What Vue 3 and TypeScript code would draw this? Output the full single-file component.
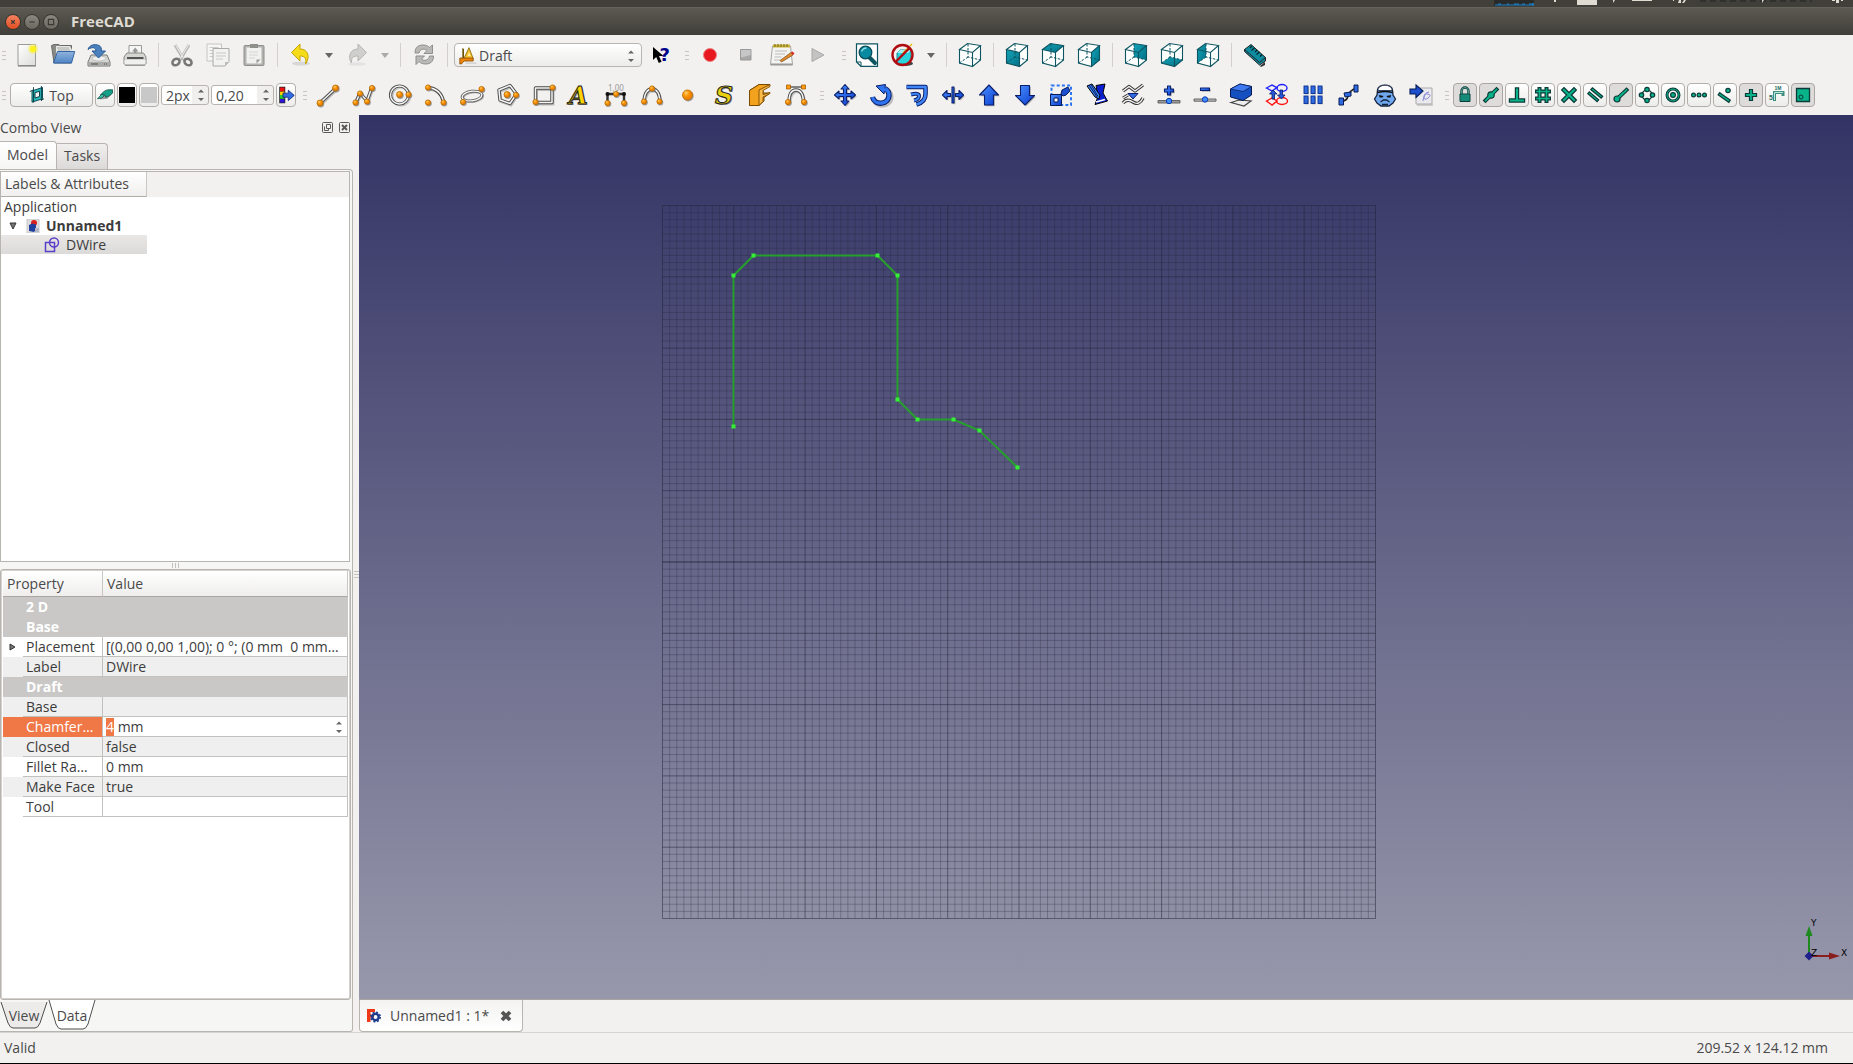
<script setup lang="ts">
import { onMounted, ref } from 'vue'

type Tool = { kind: 'icon' | 'sep' | 'grip' | 'arrow'; icon?: string; label?: string; wide?: boolean; off?: boolean }

const icon = (name: string, label: string, off = false): Tool => ({ kind: 'icon', icon: name, label, off })
const sep: Tool = { kind: 'sep' }

/* small orange node used by most drafting icons */
const ball = (x: number, y: number, r = 2.6) =>
  `<circle cx="${x + 0.8}" cy="${y + 1}" r="${r + 0.4}" fill="#777" opacity=".7"/><circle cx="${x}" cy="${y}" r="${r}" fill="url(#gOrange)" stroke="#b86a00" stroke-width=".8"/>`

/* stroked outline with a lighter core */
const tube = (d: string, outer: string, inner: string, wo: number, wi: number, cap = 'butt') =>
  `<path d="${d}" fill="none" stroke="${outer}" stroke-width="${wo}" stroke-linecap="${cap}" stroke-linejoin="round"/><path d="${d}" fill="none" stroke="${inner}" stroke-width="${wi}" stroke-linecap="${cap}" stroke-linejoin="round"/>`
const wire = (d: string) =>
  `<path d="${d}" transform="translate(1 1.4)" fill="none" stroke="#999" stroke-width="3" opacity=".6"/>` + tube(d, '#4a4a4a', '#f4f4f4', 3.4, 1.5)
const snap = (d: string, w = 4.6) => tube(d, '#0c3a38', '#08b389', w, w - 2.4, 'square')
const dot = (x: number, y: number, r = 2) => `<circle cx="${x}" cy="${y}" r="${r}" fill="#08b389" stroke="#0c3a38" stroke-width="1.2"/>`

const cubeFaces: Record<string, string> = {
  none: '',
  front: '1.5,6.5 14.5,9.5 14.5,23.5 1.5,20',
  top: '1.5,6.5 9.5,.5 22.5,2.5 14.5,9.5',
  right: '14.5,9.5 22.5,2.5 22.5,17 14.5,23.5',
  rear: '10,.5 22.5,2.5 22.5,17 10,14',
  bottom: '1.5,20 10,14 22.5,17 14.5,23.5',
  left: '1.5,6.5 10,.5 10,14 1.5,20',
}
const cube = (face: string) =>
  `<path d="M1.500 6.500 9.500.5 22.500 2.500V17l-8 6.500-13-3.500z" fill="#fdfefe"/><polygon points="${cubeFaces[face]}" fill="url(#gTeal)"/><path d="M1.500 6.500 9.500.5l13 2L14.500 9.500zM1.500 6.500V20l13 3.500V9.500M14.500 23.500l8-6.500V2.500" fill="none" stroke="#0d5560" stroke-width="1.100"/><path d="M10 1v13l12.500 3M10 14l-8.500 6" fill="none" stroke="#0d5560" stroke-width="1" stroke-dasharray="2.500 1.500"/>`

const blueShape = (d: string) =>
  `<path d="${d}" transform="translate(1.300 1.300)" fill="#888" opacity=".6"/><path d="${d}" fill="url(#gBlue)" stroke="#0a1f6b" stroke-width="1.100" stroke-linejoin="round"/>`

const icons: Record<string, string> = {
  new: `<path d="M3 1.500h17.500v21H3z" fill="url(#gPaper)" stroke="#9b9b97"/><path d="M3 23h18" stroke="#777" stroke-width="1"/><circle cx="18" cy="6" r="5" fill="#f8f04a" opacity=".55"/><circle cx="18" cy="6" r="3" fill="#fdf21b"/>`,
  open: `<path d="M.5 2.500 3 1.500h5l1 1h11.500V20H3z" fill="#8a8a87" stroke="#6b6b68"/><path d="M5 3h14l2 4v4H5z" fill="#e6e6e3"/><path d="M6 5h12M7 7h12" stroke="#aaa"/><path d="M2.500 20 6.500 8.500h17.200L20.500 20z" fill="url(#gFolder)" stroke="#3465a4"/>`,
  save: `<path d="M4 12h16l3 7v4H1v-4z" fill="#d6d6d3" stroke="#777"/><path d="M1.500 19h21v3.500h-21z" fill="#a9aba6"/><path d="M4 21h7M17 21h1M19 21h1" stroke="#555"/><ellipse cx="12" cy="15.500" rx="7" ry="2.500" fill="#eee" stroke="#aaa" stroke-width=".6"/><path d="M1 6.500C2 2 8 .5 12 2.500c2.200 1.200 2.500 3 2.500 5.500h4L11.500 15 5 8h4C9 4.500 5 3.500 1 6.500z" fill="#4a80bd" stroke="#2a5a96"/>`,
  print: `<path d="M6 12V2.500h12.500V12" fill="#f5f5f3" stroke="#999"/><path d="M12.200 4.500 9 8.500h2V11h2.500V8.500h2z" fill="#999"/><path d="M4 10h16.500l2.500 4v7H1v-7z" fill="#d5d5d2" stroke="#888"/><path d="M4 14h16.500v2H4z" fill="#555"/><path d="M1.500 17h21v4h-21z" fill="#f0f0ee"/><path d="M2 22.500h20" stroke="#999"/>`,
  cut: `<path d="M5 2l9 15M19 2 10 17" stroke="#b9b9b7" stroke-width="3"/><path d="M5.500 2l8.500 14M18.500 2 10 16" stroke="#eee" stroke-width="1"/><ellipse cx="6" cy="19" rx="3.800" ry="3" fill="none" stroke="#777" stroke-width="2.600" transform="rotate(-35 6 19)"/><ellipse cx="18" cy="19" rx="3.800" ry="3" fill="none" stroke="#777" stroke-width="2.600" transform="rotate(35 18 19)"/>`,
  copy: `<path d="M1 1h14.500v17H1z" fill="#f6f6f5" stroke="#c4c4c2"/><path d="M3.500 4.500h9M3.500 7.500h5M3.500 10.500h4M3.500 13.500h4" stroke="#ccc"/><path d="M7 5.500h16v13L19 23H7z" fill="#f2f2f0" stroke="#aaa"/><path d="M10 10h10M10 13h10M10 16h7" stroke="#c8c8c6"/><path d="M19 23v-4h4z" fill="#bbb"/>`,
  paste: `<rect x="2" y="2.500" width="20" height="20" rx="1" fill="#b2b2af" stroke="#8e8e8b"/><path d="M4.500 4.500h15v16h-15z" fill="#f1f1ef"/><path d="M7 9h9M7 12h9M7 15h6" stroke="#d4d4d2"/><path d="M8 1h8v4H8z" fill="#8f8f8c"/><path d="M14.500 20.500v-4h4z" fill="#999"/>`,
  undo: `<ellipse cx="12" cy="20.500" rx="9" ry="2" fill="#ccc" opacity=".7"/><path d="M2.500 9.500 11 1v5c8 0 10.500 8 5.500 15 1.200-5.500-.5-8-5.500-8v5z" fill="#f5dc1a" stroke="#c6a500"/>`,
  redo: `<ellipse cx="12" cy="21" rx="9" ry="1.800" fill="#ddd" opacity=".7"/><path d="M21.500 9.500 13 1v5C5 6 2.500 14 6.500 20c-.2-5.500 1.500-7 6.500-7v5z" fill="#cfcfcc" stroke="#b4b4b1"/>`,
  refresh: `<path d="M3 10c0-6 3.500-8 8-8 3 0 5 1 6.500 2.500L20.500 2v8.500H12l3-3c-3-2.500-7-1.500-8 2.500z" fill="#b9b9b6" stroke="#8f8f8c"/><path d="M21.500 13c0 6-3.500 8-8 8-3 0-5-1-6.500-2.500L4 21.500V13h8.500l-3 3c3 2.500 7 1.500 8-3z" fill="#b9b9b6" stroke="#8f8f8c"/>`,
  draft: `<path d="M4 18V2.500l2 1V18z" fill="#6b5300"/><path d="M6 15 12 2l5 13z" fill="#f2c230" stroke="#8a6500"/><path d="M10.500 12 12 7.500l2 4.500z" fill="#fff2b0"/><path d="M1 14.500h16v3.500H6l-3 3.500H1z" fill="#f0860c" stroke="#8a4a00"/><path d="M8 20.500h13" stroke="#bbb"/>`,
  whats: `<path d="M4 4v13l3.200-3 2.600 6 2.800-1.200L10 13h4.500z" fill="#000"/><text x="10.500" y="17.500" font-size="18" font-weight="700" fill="#00008b" font-family="DejaVu Sans, sans-serif">?</text>`,
  record: `<circle cx="12" cy="12" r="6.500" fill="#e8191e" stroke="#f08082"/>`,
  stop: `<path d="M6.500 6.500h10.500v10.500H6.500z" fill="#a8a8a8" stroke="#999"/><path d="M7 7h9.500v5L7 14.500z" fill="#c7c7c7"/>`,
  macro: `<path d="M2.500 3h18l2 18.500H.5z" fill="#f4f4f2" stroke="#a5a5a2"/><path d="M.5 21.500h22" stroke="#999" stroke-width="2"/><path d="M3 1.500h17v3H3z" fill="#c9b037"/><path d="M5 1v3M8 1v3M11 1v3M14 1v3M17 1v3" stroke="#7a6a1a"/><path d="M5 8h12M5 11h10M4.500 14h7M4 17h6" stroke="#bbb"/><path d="M10 17.500 21 9.500l2 2.500-11.500 7z" fill="#e08a2c" stroke="#7a4a1a" stroke-width=".7"/><path d="M21 9.500l1.500-1 2 2L23 12z" fill="#d22"/>`,
  play: `<path d="M6 5.500 18 12 6 18.500z" fill="#c3c3c3" stroke="#a9a9a9"/>`,
  fit: `<path d="M1.500.8H22.500v22.500H6L1.500 19z" fill="#fff" stroke="#0d5560" stroke-width="1.200"/><path d="M1.500 19h4.500v4.300" fill="none" stroke="#0d5560"/><path d="M14 14l6 6" stroke="#0d5560" stroke-width="4" stroke-linecap="round"/><circle cx="10.500" cy="9.500" r="6.300" fill="#0a8aa0" stroke="#0b4b57" stroke-width="1.300"/><path d="M6.500 8.500q1.500-3.500 5-3.500" stroke="#8fe0ec" stroke-width="1.300" fill="none"/>`,
  style: `<ellipse cx="14" cy="20.500" rx="8" ry="2.500" fill="#444"/><path d="M6 10 9 7h11v11l-3 3H6z" fill="#2bd3da" stroke="#1b8b96"/><path d="M9 7h11l-3 3H6z" fill="#a5f1f2"/><path d="m19 3 2-2M12 10l5-5" stroke="#e8c010" stroke-width="1.600"/><circle cx="11.500" cy="12" r="10" fill="none" stroke="#b00c12" stroke-width="2.400"/><path d="M4.500 5 18.500 19" stroke="#b00c12" stroke-width="0"/><path d="M18.500 5 4.500 19" stroke="#b00c12" stroke-width="2.400"/>`,
  axo: cube('none'), front: cube('front'), top: cube('top'), right: cube('right'), rear: cube('rear'), bottom: cube('bottom'), left: cube('left'),
  ruler: `<path d="M2 9 17 23l5-4v3l-4 2z" fill="#333"/><path d="M1.500 6.500 8 1.500 22.500 14.500v3.500L16.500 22 1.500 8.500z" fill="#0f8ba0" stroke="#222"/><path d="M1.500 6.500 16.500 19.500l6-5" fill="none" stroke="#222"/><path d="m9 3-2 2m4.500 0-3 2.500M14 7l-2 2m4.500 0-3 2.500M19 11.500l-2 2" stroke="#022" stroke-width="1.100"/>`,
  plane: `<path d="M4 6.500 18 2v15L4 21.500z" fill="#28b9bd" stroke="#0b4a50" stroke-width="1.300"/><path d="M8 9l6-2v7l-6 2z" fill="#f4f4f4" stroke="#0b3a40" stroke-width="1.300"/><path d="M1 7.500l4-2M16 19l4-2M6 1.500V22M16.500 0v20" stroke="#0b3a40" stroke-width="1.200"/>`,
  construct: `<path d="M5 18 9 11l12-4 2 2-8 8z" fill="#444" opacity=".5"/><path d="M6 12C9 8 13 5 17 5h5v4c-2 3-5 5-9 6l-1-3z" fill="#13a088" stroke="#0a4a40"/><path d="M2 17 8 10.500l3 2.500-3 3z" fill="#3fc0aa" stroke="#0a4a40"/>`,
  apply: `<path d="M3 1h8v22H3z" fill="#222"/><path d="M4 2h6v5H4z" fill="#e11"/><path d="M4 7.500h6V12H4z" fill="#fc0"/><path d="M4 12h6v5H4z" fill="#2c3"/><path d="M4 17.500h6V22H4z" fill="#31d"/><path d="M8 9.500h7V5.500l8 7-8 7V15H8z" fill="#2f6ae0" stroke="#0a1f6b"/>`,
  line: wire('M4 20 20 5') + ball(4, 20, 3) + ball(19.500, 5, 3),
  wire: wire('M4 19 8 10 15 18 19.500 5.500') + ball(3.500, 19.500) + ball(8, 10.500) + ball(15, 18.500) + ball(20, 5),
  circle: `<circle cx="13" cy="13" r="9" fill="none" stroke="#999" stroke-width="3" opacity=".5"/><circle cx="11.500" cy="12" r="9" fill="none" stroke="#4a4a4a" stroke-width="3.200"/><circle cx="11.500" cy="12" r="9" fill="none" stroke="#f4f4f4" stroke-width="1.400"/>` + ball(11.500, 11.500, 3) + ball(20.500, 11.500),
  arc: wire('M4 4.500Q17 6 19.500 19') + ball(4, 4.500) + ball(4, 19.500) + ball(19.500, 19.500),
  ellipse: `<g transform="rotate(-8 12 13)"><ellipse cx="13" cy="14.300" rx="10" ry="4.800" fill="none" stroke="#aaa" stroke-width="2"/><ellipse cx="12" cy="13" rx="10" ry="4.800" fill="none" stroke="#555" stroke-width="2.800"/><ellipse cx="12" cy="13" rx="10" ry="4.800" fill="none" stroke="#f6f6f6" stroke-width="1.300"/></g>` + ball(3, 19) + ball(21.500, 6),
  polygon: wire('M3 7 14 2.500 20.500 11 14 20.500 4 17z') + ball(11, 11.500, 3) + ball(20, 12),
  rect: wire('M3.500 5H20v14.500H3.500z') + ball(20.500, 4.500) + ball(3.500, 19),
  text: `<text x="2" y="22" font-size="24" font-style="italic" font-weight="700" fill="#888" font-family="DejaVu Serif, serif">A</text><text x="1" y="21" font-size="24" font-style="italic" font-weight="700" fill="#ffd400" stroke="#222" stroke-width="1" font-family="DejaVu Serif, serif">A</text>`,
  dim: `<text x="4" y="8" font-size="8" fill="#999" font-family="Noto Sans, sans-serif">1,00</text><path d="M3.500 11H21M3.500 11v8M20 11v8" stroke="#333" stroke-width="2.400"/><circle cx="3.500" cy="11" r="2" fill="#111"/><circle cx="20" cy="11" r="2" fill="#111"/>` + ball(12, 11) + ball(3.500, 20) + ball(20, 20),
  bspline: wire('M4 18Q5 6 12 6T20 18') + ball(12, 5.500) + ball(4, 18.500) + ball(19.500, 18.500),
  point: ball(11.500, 12, 5),
  shape: `<text x="4" y="21.500" font-size="25" font-style="italic" font-weight="700" fill="#888" font-family="DejaVu Serif, serif">S</text><text x="3" y="20.500" font-size="25" font-style="italic" font-weight="700" fill="#e8cf10" stroke="#222" stroke-width="1" font-family="DejaVu Serif, serif">S</text>`,
  face: `<path d="M1.500 7.500 11 1.500v16L1.500 22.500z" fill="#f2a21c" stroke="#7a4a00"/><path d="M1.500 7.500 11 1.500h11l-7 5v3.500h7l-6 4.500v3.500L11 22.500H1.500z" fill="#f2a21c" stroke="#7a4a00"/><path d="M11 7v15.500l4-4V14l7-3.500V9.500l-7 2V7.500l7-4V1.500z" fill="#fbbb4a" stroke="#7a4a00" stroke-width=".9"/>`,
  bezier: `<path d="M4 4h16" stroke="#555" stroke-width="1.400"/>` + wire('M5 19Q5 7 12 7T19.500 19') + `<path d="M2.500 2h4v4h-4zM17.500 2h4v4h-4z" fill="#ff9c1a" stroke="#a85f00" stroke-width=".8"/>` + ball(4, 19) + ball(20, 19),
  move: blueShape('M12 1.500 16 6h-2.500v4.500H18V8l4.500 4-4.500 4v-2.500h-4.500V18H16l-4 4.500L8 18h2.500v-4.500H6V16l-4.500-4L6 8v2.500h4.500V6H8z'),
  rotate: `<path d="M4 15c2 9 17 8 17-2 0-3-1-5-4-7" transform="translate(1 1)" fill="none" stroke="#888" stroke-width="5" opacity=".5"/>` + tube('M3.500 14c2 9 16.500 8 16.500-2 0-3-1.500-5-4-6.500', '#0a1f6b', '#2f74ee', 5.400, 3.400) + `<path d="M7 3 16.500 1.500 15 11z" fill="#2f74ee" stroke="#0a1f6b" stroke-linejoin="round"/><path d="m13.500 5.500 3.500 2" stroke="#2f74ee" stroke-width="3"/>`,
  offset: tube('M1.500 4H20.500V11q0 8-9 10.500', '#0a1f6b', '#3f85f5', 4.600, 2.600) + tube('M6 11.500q8-2 8 1.500t-5 4.500', '#0a1f6b', '#3f85f5', 4, 2),
  trimex: blueShape('M1.500 12 6 7.500v3h3.500v3H6v3zM22.500 12 18 7.500v3h-3.500v3H18v3zM11 4h2v16h-2z'),
  upgrade: blueShape('M12 2 21.500 12H16.500v10h-9V12H2.500z'),
  downgrade: blueShape('M12 22 21.500 12.500H16.500V2.500h-9v10H2.500z'),
  scale: `<path d="M2.500 2.500H22v19.500H2.500z" fill="none" stroke="#2a76f0" stroke-width="2" stroke-dasharray="3 2.200"/><path d="M1.500 11.500H12.500V22.500H1.500z" fill="url(#gBlue)" stroke="#061a55"/><path d="M5 15h4v4H5z" fill="#fff" stroke="#061a55"/><path d="m12 11 1-4 2-1 4-2 2 4-4 4-3 1z" fill="#1a50d0" stroke="#061a55"/>`,
  edit: `<path d="M11 2.500 20 1l-2 9 4.500 8L10 21.500l3-8z" fill="#0b1fd0" stroke="#000"/><path d="M2 3 7 1l8 11-1 4-4-2z" fill="#3b84f0" stroke="#000"/><path d="m4 2 8 12M6 1.500l7 12" stroke="#0a1f6b"/><path d="m11 19 9-2.500" stroke="#fff" stroke-width="1.500"/>`,
  wire2bs: tube('M2 8 8 3.500 14 8 22 2', '#333', '#f2f2f2', 3.400, 1.400) + tube('M2 20q4-5 10-1t10-4', '#333', '#f2f2f2', 3.400, 1.400) + tube('M2 15l5-3', '#333', '#f2f2f2', 3, 1.200) + `<path d="M7 10.500h10L12 16z" fill="#2f6ae0" stroke="#0a1f6b"/>`,
  addpt: `<path d="M1 17.500h22v2.500H1z" fill="#999" stroke="#666"/>` + blueShape('M10.500 3h3v3h3v3h-3v3h-3V9h-3V6h3z') + `<circle cx="12" cy="18" r="2.700" fill="#3f8cff" stroke="#0a3bb0"/>`,
  delpt: `<path d="M1 16h22v2.200H1z" fill="#bbb" stroke="#666"/>` + blueShape('M7.500 5h9v2.500h-9z') + `<circle cx="12" cy="16.500" r="2.700" fill="#3f8cff" stroke="#0a3bb0"/>`,
  to2d: `<path d="M2 19.500 10 17l12 1-7 5z" fill="#eee" stroke="#444" stroke-width="1.200"/><path d="M1.500 6 11 1l11.500 2.500V12L14 17.500 1.500 14z" fill="#1450c0" stroke="#061a55"/><path d="M1.500 6 11 1l11.500 2.500-8.500 5z" fill="#3f7af0" stroke="#061a55" stroke-width=".7"/>`,
  draft2sk: `<path d="M1.500 5 7 2l5 2.500L7 8z" fill="none" stroke="#22f" stroke-width="1.400"/><ellipse cx="17" cy="5" rx="5" ry="3.500" fill="none" stroke="#22f" stroke-width="1.400"/><path d="M1.500 18 7 15l5 3-5 4z" fill="none" stroke="#f11" stroke-width="1.400"/><ellipse cx="17" cy="18" rx="5.500" ry="3.500" fill="none" stroke="#f11" stroke-width="1.400"/><path d="M8 7 4.500 11H7v5h2.500v-5H12zM16.500 16 20 12h-2.500V7H15v5h-2.500z" fill="#2458d8" stroke="#0a1f6b" stroke-width=".8"/>`,
  array: [3, 10, 17].map(x => [3, 13].map(y => `<rect x="${x + 0.8}" y="${y + 0.8}" width="4" height="7.500" fill="#aaa"/><rect x="${x}" y="${y}" width="4" height="7.500" fill="#2f6ae0" stroke="#0a2f90" stroke-width=".9"/>`).join('')).join(''),
  patharray: `<path d="M5 18q5 0 6-5t8-8" fill="none" stroke="#222" stroke-width="1.600"/><path d="M2 15h4.500v7H2z" fill="#2f6ae0" stroke="#061a55"/><path d="m7 10 7-1v4l-6 1z" fill="#2f6ae0" stroke="#061a55"/><path d="M17 2h4v7h-4z" fill="#2f6ae0" stroke="#061a55"/>`,
  clone: `<path d="M4.500 7C5 .5 19 .5 19.500 7l.5 5 2.500 4-2.500 4-4 3H8l-4-3-2.500-4L4 12z" fill="#6fa8ee" stroke="#16233f" stroke-width="1.300"/><path d="M4.800 7.500C5 .5 19 .5 19.200 7.500z" fill="#fff" stroke="#16233f" stroke-width=".8"/><path d="M4.500 9.500q7.500-2 15 0" fill="none" stroke="#111" stroke-width="1.400"/><path d="M6 12l4.500 1-1 1.500H6.500zM18 12l-4.500 1 1 1.500h3z" fill="#111"/><path d="M7.500 19l3-2h3l3 2M9 21.500h6" fill="none" stroke="#16233f" stroke-width="1.300"/>`,
  drawing: `<path d="M7 5h16v16H7z" fill="#e9e9ee" stroke="#aaa"/><path d="M8 22h16" stroke="#aaa"/><path d="M14 18q1-8 5-7t0 4-4-1 5-5" fill="none" stroke="#8a8ad8"/><path d="M1 6h6V2l7 6-7 6.500V11H1z" fill="#1c50d0" stroke="#061a55" stroke-width="1.100"/>`,
  lock: `<path d="M8.500 11V8a3.500 3.500 0 0 1 7 0v3" fill="none" stroke="#0c3a38" stroke-width="2.400"/><path d="M8.500 11V8a3.500 3.500 0 0 1 7 0v3" fill="none" stroke="#5fbfae" stroke-width=".8"/><path d="M7 11h10v7.500H7z" fill="#1aa08a" stroke="#0c3a38"/><path d="M7.500 13h9M7.500 15h9M7.500 17h9" stroke="#0d6d60" stroke-width=".8"/>`,
  mid: snap('M6.500 17.500 17.500 6.500', 4) + `<circle cx="12" cy="12" r="3.200" fill="#08b389" stroke="#0c3a38" stroke-width="1.200"/><path d="m8 16 8-8" stroke="#08b389" stroke-width="1.800"/>`,
  perp: snap('M6 17.500h12M12 17V6.500', 4.400) + `<path d="M12 8v8.500" stroke="#08b389" stroke-width="2"/>`,
  grid: snap('M8.500 6v12M15.500 6v12M6 8.500h12M6 15.500h12', 4),
  cross: snap('M7 7 17 17M17 7 7 17', 4.600),
  parallel: snap('M6.500 10.500 14 17', 3.600) + snap('M9.500 6.500 18 13.500', 3.600),
  endp: snap('M8 16 17.500 7', 4) + `<circle cx="8" cy="16" r="3" fill="#08b389" stroke="#0c3a38" stroke-width="1.200"/><path d="m8.500 15.500 6-6" stroke="#08b389" stroke-width="1.600"/>`,
  angle: `<circle cx="12" cy="12" r="5" fill="none" stroke="#0c3a38" stroke-width="1.200"/>` + dot(12, 6.500, 2.200) + dot(12, 17.500, 2.200) + dot(6.500, 12, 2.200) + dot(17.500, 12, 2.200),
  center: `<circle cx="12" cy="12" r="6" fill="none" stroke="#0c3a38" stroke-width="3"/><circle cx="12" cy="12" r="6" fill="none" stroke="#08b389" stroke-width="1"/>` + dot(12, 12, 2.400),
  ext: dot(6.500, 12, 1.900) + dot(12, 12, 1.900) + dot(17.500, 12, 1.900),
  near: snap('M7 11.500 15.500 17.500', 3.800) + dot(15, 7.500, 2.200),
  ortho: snap('M12 8v8M8 12h8', 4.200),
  special: `<path d="M9.500 18V9.500H18V13" fill="none" stroke="#3f8f80" stroke-width="3"/><path d="M9.500 17V9.500H18" fill="none" stroke="#bfe8dd" stroke-width="1"/><text x="9.500" y="7" font-size="5" font-weight="700" fill="#1c6b5e" font-family="Liberation Sans, sans-serif">1M</text><text x="4" y="17" font-size="7" font-weight="700" fill="#1c6b5e" font-family="Liberation Sans, sans-serif">5</text>`,
  wp: `<path d="M5.500 5.500h13v13h-13z" fill="#08b389" stroke="#0c3a38" stroke-width="1.300"/><circle cx="10" cy="14" r="2" fill="#08b389" stroke="#0c3a38"/>`,
}

const row1a: Tool[] = [
  { kind: 'grip' }, icon('new', 'New'), icon('open', 'Open'), icon('save', 'Save'), icon('print', 'Print'), sep,
  icon('cut', 'Cut'), icon('copy', 'Copy'), icon('paste', 'Paste'), sep,
  icon('undo', 'Undo'), { kind: 'arrow', label: 'Undo list' }, icon('redo', 'Redo', true), { kind: 'arrow', label: 'Redo list', off: true }, sep,
  icon('refresh', 'Refresh'), sep,
]
const row1b: Tool[] = [
  icon('whats', "What's This?"), { kind: 'grip', wide: true },
  icon('record', 'Record macro'), icon('stop', 'Stop macro'), icon('macro', 'Macros'), icon('play', 'Execute macro'), { kind: 'grip', wide: true },
  icon('fit', 'Fit all'), icon('style', 'Draw style'), { kind: 'arrow', label: 'Draw styles' }, sep,
  icon('axo', 'Axonometric'), sep, icon('front', 'Front'), icon('top', 'Top view'), icon('right', 'Right'), sep,
  icon('rear', 'Rear'), icon('bottom', 'Bottom'), icon('left', 'Left'), sep, icon('ruler', 'Measure distance'),
]
const row2: Tool[] = [
  { kind: 'grip', wide: true },
  ...([['line', 'Line'], ['wire', 'Wire'], ['circle', 'Circle'], ['arc', 'Arc'], ['ellipse', 'Ellipse'], ['polygon', 'Polygon'], ['rect', 'Rectangle'], ['text', 'Text'], ['dim', 'Dimension'], ['bspline', 'B-spline'], ['point', 'Point'], ['shape', 'Shape string'], ['face', 'Facebinder'], ['bezier', 'Bezier curve']]).map(([i, l]) => icon(i, l)),
  { kind: 'grip', wide: true },
  ...([['move', 'Move'], ['rotate', 'Rotate'], ['offset', 'Offset'], ['trimex', 'Trimex'], ['upgrade', 'Upgrade'], ['downgrade', 'Downgrade'], ['scale', 'Scale'], ['edit', 'Edit'], ['wire2bs', 'Wire to B-spline'], ['addpt', 'Add point'], ['delpt', 'Delete point'], ['to2d', 'Shape 2D view'], ['draft2sk', 'Draft to sketch'], ['array', 'Array'], ['patharray', 'Path array'], ['clone', 'Clone'], ['drawing', 'Drawing']]).map(([i, l]) => icon(i, l)),
  { kind: 'grip', wide: true },
]
const snaps = [
  { i: 'lock', l: 'Toggle snap', on: true }, { i: 'mid', l: 'Midpoint', on: true }, { i: 'perp', l: 'Perpendicular' }, { i: 'grid', l: 'Grid' },
  { i: 'cross', l: 'Intersection' }, { i: 'parallel', l: 'Parallel' }, { i: 'endp', l: 'Endpoint', on: true }, { i: 'angle', l: 'Angle' },
  { i: 'center', l: 'Center' }, { i: 'ext', l: 'Extension' }, { i: 'near', l: 'Near' }, { i: 'ortho', l: 'Ortho', on: true },
  { i: 'special', l: 'Dimensions' }, { i: 'wp', l: 'Working plane', on: true },
]

type Prop = { name: string; value?: string; group?: boolean; tint?: boolean; expand?: boolean; edit?: boolean }
const props: Prop[] = [
  { name: '2 D', group: true },
  { name: 'Base', group: true },
  { name: 'Placement', value: '[(0,00 0,00 1,00); 0 °; (0 mm\u00a0 0 mm…', expand: true },
  { name: 'Label', value: 'DWire', tint: true },
  { name: 'Draft', group: true },
  { name: 'Base', value: '', tint: true },
  { name: 'Chamfer…', value: '4 mm', edit: true },
  { name: 'Closed', value: 'false', tint: true },
  { name: 'Fillet Ra…', value: '0 mm' },
  { name: 'Make Face', value: 'true', tint: true },
  { name: 'Tool', value: '' },
]

const step = 7.13
const gridLines = Array.from({ length: 101 }, (_, n) => ({ at: n * step, major: n % 10 === 0, axis: n === 50 }))
const span = 100 * step
const nodes = [[71, 221], [71, 70], [91, 50], [215, 50], [235, 70], [235, 194], [255, 214], [291, 214], [317, 225], [355, 262]]
const wirePath = nodes.map(p => p.join(',')).join(' ')

const editor = ref<HTMLInputElement[] | null>(null)
onMounted(() => {
  const field = editor.value?.[0]
  field?.focus()
  field?.setSelectionRange(0, 1)
})
</script>

<template>
  <div class="app">
    <svg class="defs" aria-hidden="true">
      <defs>
        <radialGradient id="gOrange" cx=".35" cy=".3"><stop offset="0" stop-color="#ffd27a" /><stop offset=".5" stop-color="#ff9f12" /><stop offset="1" stop-color="#f08400" /></radialGradient>
        <linearGradient id="gBlue" x2="1" y2="1"><stop offset="0" stop-color="#4d93ff" /><stop offset="1" stop-color="#0a3bd0" /></linearGradient>
        <linearGradient id="gTeal" x2="1" y2="1"><stop offset="0" stop-color="#14a3b8" /><stop offset="1" stop-color="#027186" /></linearGradient>
        <linearGradient id="gPaper" x2="1" y2="1"><stop offset="0" stop-color="#fff" /><stop offset="1" stop-color="#dcdcda" /></linearGradient>
        <linearGradient id="gFolder" x2="0" y2="1"><stop offset="0" stop-color="#8fb3dd" /><stop offset="1" stop-color="#5085c4" /></linearGradient>
      </defs>
    </svg>

    <div class="desktop-bar">
      <svg width="373" height="7" viewBox="0 0 373 7" aria-hidden="true">
        <path d="M14 0h40v6H14z" fill="#2a2a28" />
        <path d="M15 5h39M18 4h3M27 4h2M34 4h5M42 4h3M49 4h5M53 3v3" stroke="#1a86d0" stroke-width="1" />
        <path d="M97 0h20v5H97zM152 0h20v1h-20zM74 0h2v2h-2zM133 0h2l-2 3zM193 0h1v1h-1zM199 0h2v3h-3zM204 0h2l-2 3h-2zM352 0h3v1h-3zM356 0h3v3h-3zM361 0h2v1h-2z" fill="#dfdbd2" />
        <path d="M220 1h112" stroke="#30302d" stroke-width="2" stroke-dasharray="6 4" />
        <path d="M282 0h2l-2 3z" fill="#dfdbd2" />
      </svg>
    </div>

    <header class="titlebar">
      <button class="win close" aria-label="Close"><svg viewBox="0 0 16 16"><path d="m6 6 4 4m0-4-4 4" /></svg></button>
      <button class="win" aria-label="Minimize"><svg viewBox="0 0 16 16"><path d="M5 8h6" /></svg></button>
      <button class="win" aria-label="Maximize"><svg viewBox="0 0 16 16"><path d="M5 5h6v6H5z" /></svg></button>
      <h1>FreeCAD</h1>
    </header>

    <div class="toolbar" role="toolbar" aria-label="File and view">
      <template v-for="(t, n) in row1a" :key="n">
        <span v-if="t.kind === 'sep'" class="sep"></span>
        <span v-else-if="t.kind === 'grip'" class="grip"></span>
        <button v-else-if="t.kind === 'arrow'" class="arrow" :class="{ off: t.off }" :aria-label="t.label"></button>
        <button v-else class="tool" :aria-label="t.label"><svg viewBox="0 0 24 24" v-html="icons[t.icon!]"></svg></button>
      </template>
      <div class="combo">
        <svg class="combo-icon" viewBox="0 0 24 24" v-html="icons.draft"></svg>
        <select aria-label="Workbench"><option>Draft</option></select>
        <svg class="updown" viewBox="0 0 8 12"><path d="M1 3.500 4 .5l3 3zM1 9l3 3 3-3z" /></svg>
      </div>
      <template v-for="(t, n) in row1b" :key="n">
        <span v-if="t.kind === 'sep'" class="sep"></span>
        <span v-else-if="t.kind === 'grip'" class="grip" :class="{ wide: t.wide }"></span>
        <button v-else-if="t.kind === 'arrow'" class="arrow" :aria-label="t.label"></button>
        <button v-else class="tool" :aria-label="t.label"><svg viewBox="0 0 24 24" v-html="icons[t.icon!]"></svg></button>
      </template>
    </div>

    <div class="toolbar" role="toolbar" aria-label="Draft">
      <span class="grip"></span>
      <div class="tray">
        <button class="framed plane"><svg viewBox="0 0 24 24" v-html="icons.plane"></svg>Top</button>
        <button class="framed swatch" aria-label="Construction mode"><svg viewBox="0 0 24 24" v-html="icons.construct"></svg></button>
        <button class="framed swatch" aria-label="Line color"><i class="black"></i></button>
        <button class="framed swatch" aria-label="Face color"><i></i></button>
        <div class="spin narrow"><input value="2px" aria-label="Line width" /><svg class="updown" viewBox="0 0 8 12"><path d="M1 3.500 4 .5l3 3zM1 9l3 3 3-3z" /></svg></div>
        <div class="spin"><input value="0,20" aria-label="Text size" /><svg class="updown" viewBox="0 0 8 12"><path d="M1 3.500 4 .5l3 3zM1 9l3 3 3-3z" /></svg></div>
        <button class="framed swatch" aria-label="Apply to selected"><svg viewBox="0 0 24 24" v-html="icons.apply"></svg></button>
      </div>
      <template v-for="(t, n) in row2" :key="n">
        <span v-if="t.kind === 'grip'" class="grip" :class="{ wide: t.wide }"></span>
        <button v-else class="tool" :aria-label="t.label"><svg viewBox="0 0 24 24" v-html="icons[t.icon!]"></svg></button>
      </template>
      <div class="tray">
        <button v-for="s in snaps" :key="s.i" class="framed snap" :class="{ on: s.on }" :aria-label="s.l"><svg viewBox="0 0 24 24" v-html="icons[s.i]"></svg></button>
      </div>
    </div>

    <div class="body">
      <aside class="dock">
        <div class="dock-title">
          <h2>Combo View</h2>
          <button aria-label="Float"><svg viewBox="0 0 11 11"><rect x=".5" y=".5" width="10" height="10" rx="1" /><path d="M4.500 2.500h4v4h-4zM2.500 4.500v4h4v-2" /></svg></button>
          <button aria-label="Close panel"><svg viewBox="0 0 11 11"><rect x=".5" y=".5" width="10" height="10" rx="1" /><path d="m3 3 5 5m0-5-5 5" stroke-width="2" /></svg></button>
        </div>
        <div class="tabs" role="tablist">
          <button class="tab active" role="tab">Model</button>
          <button class="tab" role="tab">Tasks</button>
        </div>
        <div class="pane">
          <div class="tree">
            <div class="tree-head"><span>Labels &amp; Attributes</span></div>
            <ul>
              <li class="root">Application</li>
              <li class="doc">
                <svg class="twist" viewBox="0 0 8 8"><path d="M1 1h6L4 7z" fill="#777" stroke="#333" /></svg>
                <svg class="doc-icon" viewBox="0 0 14 14"><path d="M1 0h12v14H1z" fill="#ddd" stroke="#c8c8c8" /><circle cx="8" cy="4" r="3" fill="#d8201c" /><path d="m3 6 3-1.500 4 1V11l-2 2-5-1z" fill="#1f3f9f" /><path d="M9 9h4v4H9z" fill="#b4b8c4" /></svg>
                <b>Unnamed1</b>
              </li>
              <li class="leaf selected">
                <svg class="wire-icon" viewBox="0 0 16 16"><path d="M1.500 5.500h9v9h-9z" /><circle cx="10" cy="5.500" r="4.500" /></svg>
                DWire
              </li>
            </ul>
          </div>
          <div class="splitter"><i></i></div>
          <div class="props">
            <table>
              <colgroup><col class="gutter" /><col class="name" /><col /></colgroup>
              <thead><tr><th colspan="2">Property</th><th>Value</th></tr></thead>
              <tbody>
                <tr v-for="(p, n) in props" :key="n" :class="{ group: p.group, tint: p.tint, edit: p.edit }">
                  <td class="lead"><svg v-if="p.expand" viewBox="0 0 8 8"><path d="M1 1v6l5-3z" fill="#777" stroke="#333" /></svg></td>
                  <td v-if="p.group" colspan="2">{{ p.name }}</td>
                  <template v-else>
                    <td class="label">{{ p.name }}</td>
                    <td class="value">
                      <div v-if="p.edit" class="editor">
                        <input ref="editor" :value="p.value" :aria-label="p.name" />
                        <svg class="updown" viewBox="0 0 8 12"><path d="M1 3.500 4 .5l3 3zM1 9l3 3 3-3z" /></svg>
                      </div>
                      <template v-else>{{ p.value }}</template>
                    </td>
                  </template>
                </tr>
              </tbody>
            </table>
          </div>
          <div class="sub-tabs" role="tablist">
            <button role="tab"><svg viewBox="0 0 48 30"><path d="M1 2 8 23q2 5 5 5h22q3 0 5-5L47 2" fill="#ecebea" /></svg><span>View</span></button>
            <button role="tab" class="active"><svg viewBox="0 0 48 30"><path d="M1 0 8 24q2 5 5 5h22q3 0 5-5L47 0" fill="#fff" /></svg><span>Data</span></button>
          </div>
        </div>
      </aside>
      <div class="vsplit"><i></i></div>

      <main class="mdi">
        <div class="canvas">
          <svg class="scene" aria-label="3D view">
            <g transform="translate(303.500 90.500)">
              <g stroke="#222238">
                <template v-for="(l, n) in gridLines" :key="n">
                  <line :x1="l.at" y1="0" :x2="l.at" :y2="span" :opacity="l.major ? 0.5 : 0.27" />
                  <line x1="0" :y1="l.at" :x2="span" :y2="l.at" :opacity="l.axis ? 0.8 : l.major ? 0.5 : 0.27" />
                </template>
              </g>
              <polyline :points="wirePath" fill="none" stroke="#25a02c" stroke-width="2" />
              <rect v-for="(p, n) in nodes" :key="n" :x="p[0] - 2" :y="p[1] - 2" width="4" height="4" fill="#36ee36" />
            </g>
          </svg>
          <svg class="axes" viewBox="0 0 60 60" aria-hidden="true">
            <path d="M16 41V18" stroke="#1e8a1e" stroke-width="2" /><path d="M12.500 21 16 11l3.500 10z" fill="#1e8a1e" />
            <path d="M16 41h24" stroke="#8a1e1e" stroke-width="2" /><path d="M36 37.500 47 41l-11 3.500z" fill="#8a1e1e" />
            <path d="m16 36.500 4.500 4.500-4.500 4.500-4.500-4.500z" fill="#20208c" />
            <text x="18" y="11">Y</text><text x="48" y="41">X</text><text x="18" y="41">Z</text>
          </svg>
        </div>
        <div class="mdi-tabs">
          <div class="mdi-tab">
            <svg class="fc" viewBox="0 0 14 14"><path d="M0 0h8v3H3.500v2.500H7v3H3.500V13H0z" fill="#f03a17" /><circle cx="8.500" cy="8" r="3.200" fill="none" stroke="#1c3d8e" stroke-width="2.400" /><circle cx="8.500" cy="8" r="4.700" fill="none" stroke="#1c3d8e" stroke-width="1.600" stroke-dasharray="1.900 1.800" /></svg>
            <span>Unnamed1 : 1*</span>
            <button aria-label="Close document"><svg viewBox="0 0 12 12"><path d="m2 2 8 8m0-8-8 8" stroke="#555" stroke-width="3.800" /></svg></button>
          </div>
        </div>
      </main>
    </div>

    <footer class="status"><span>Valid</span><span class="dims">209.52 x 124.12 mm</span></footer>
  </div>
</template>

<style>
body { margin: 0; background: #f2f1f0; }
</style>

<style scoped>
* { box-sizing: border-box; }
.app { display: flex; flex-direction: column; min-height: 100vh; background: #f2f1f0; color: #4a4a4a; font: 14px/19px "Open Sans", "Noto Sans", sans-serif; }
.defs { position: absolute; width: 0; height: 0; }
button { font: inherit; color: inherit; border: 0; padding: 0; background: none; }
input, select { font: inherit; color: inherit; }
h1, h2, ul { margin: 0; padding: 0; }

.desktop-bar { height: 7px; background: #403f3a; display: flex; justify-content: flex-end; }
.titlebar { height: 28px; display: flex; align-items: center; gap: 3px; padding: 0 5px; background: linear-gradient(#5c5a51, #3f3e39); border-top: 1px solid #66645a; }
.titlebar h1 { font-size: 15px; color: #dfdbd2; margin-left: 9px; }
.win { width: 16px; height: 16px; border-radius: 8px; background: linear-gradient(#8a877e, #6b6961); border: 1px solid #35342f; }
.win.close { background: linear-gradient(#f58160, #df4f20); }
.win svg { display: block; width: 14px; height: 14px; fill: none; stroke: #3a3935; stroke-width: 1.3; }

.toolbar { height: 40px; display: flex; align-items: center; }
.tool { flex: none; width: 36px; height: 32px; display: grid; place-items: center; }
.tool svg { width: 24px; height: 24px; overflow: visible; }
.sep { flex: none; width: 11px; height: 24px; background: linear-gradient(#d4d1cd, #d4d1cd) center / 1px 100% no-repeat; }
.grip { flex: none; width: 9px; height: 10px; background: repeating-linear-gradient(#c9c6c2 0 1px, transparent 1px 4px) 2px 1px / 4px 9px no-repeat; }
.grip.wide { width: 13px; background-position: 6px 1px; }
.arrow { flex: none; width: 20px; height: 24px; display: grid; place-items: center; }
.arrow::after { content: ""; border: 4px solid transparent; border-top: 5px solid #666; border-bottom: 0; }
.arrow.off::after { border-top-color: #aaa; }
.combo { position: relative; width: 190px; padding: 0 1px; }
.combo select { display: block; width: 100%; height: 24px; appearance: none; padding: 0 24px; border: 1px solid #b8b4af; border-radius: 4px; background: linear-gradient(#fff, #ececea); }
.combo-icon { position: absolute; left: 6px; top: 3px; width: 20px; height: 20px; }
.combo .updown { position: absolute; right: 8px; top: 7px; }
.updown { width: 8px; height: 12px; fill: #666; }

.tray { display: flex; align-items: center; gap: 2px; padding: 0 1px; }
.framed { height: 24px; border: 1px solid #b3aeaa; border-radius: 4px; background: linear-gradient(#fff, #ececea); display: flex; align-items: center; justify-content: center; }
.framed.plane { width: 83px; gap: 2px; }
.plane svg { width: 18px; height: 18px; }
.swatch { width: 20px; }
.swatch svg { flex: none; width: 18px; height: 18px; }
.swatch i { width: 16px; height: 16px; background: #c8c8c8; }
.swatch i.black { background: #000; }
.snap { width: 24px; }
.snap svg { flex: none; width: 24px; height: 24px; }
.snap.on { background: #dedcda; border-color: #aaa6a2; }
.spin { position: relative; width: 63px; height: 20px; }
.spin.narrow { width: 48px; }
.spin input { display: block; width: 100%; height: 20px; padding: 0 16px 0 4px; border: 1px solid #b8b4af; border-radius: 3px; background: linear-gradient(90deg, #fff, #fff) 0 0 / calc(100% - 16px) 100% no-repeat, #f0efed; }
.spin .updown { position: absolute; right: 4px; top: 4px; }

.body { flex: 1; display: flex; min-height: 0; }
.dock { width: 353px; flex: none; display: flex; flex-direction: column; }
.dock-title { height: 26px; display: flex; align-items: center; gap: 6px; padding: 0 3px 2px 0; }
.dock-title h2 { flex: 1; font-size: 14px; font-weight: 400; }
.dock-title button, .dock-title svg { display: block; width: 11px; height: 11px; }
.dock-title svg { fill: none; stroke: #5a5a5a; }
.tabs { display: flex; align-items: flex-end; height: 28px; }
.tab { height: 26px; width: 51px; border: 1px solid #b8b4af; border-bottom: 0; border-left: 0; border-radius: 0 4px 0 0; background: linear-gradient(#f0efee, #dcdad8); padding-bottom: 2px; }
.tab.active { width: 57px; height: 28px; background: linear-gradient(#fff, #f6f6f5); padding-right: 1px; }
.pane { flex: 1; display: flex; flex-direction: column; border: 1px solid #b8b4af; border-left: 0; border-radius: 0 4px 3px 0; background: #f6f6f5; padding: 1px 1px 0 0; }
.tree { flex: none; height: 391px; margin: 0 1px 0 0; border: 1px solid #b8b4af; background: #fff; }
.tree-head { height: 25px; background: #f2f1f0; }
.tree-head span { display: block; width: 146px; height: 25px; line-height: 24px; padding-left: 4px; border-right: 1px solid #c9c6c2; border-bottom: 1px solid #b0aca8; background: linear-gradient(#fff, #f0efee); }
.tree ul { list-style: none; color: #3c3c3c; }
.tree li { height: 19px; width: 146px; display: flex; align-items: center; }
.tree li.root { padding-left: 3px; }
.tree li.doc { padding-left: 8px; }
.twist { width: 8px; height: 8px; margin-right: 9px; }
.doc-icon { width: 14px; height: 14px; margin-right: 6px; }
.tree li.leaf { padding-left: 43px; gap: 6px; background: linear-gradient(#e9e8e7, #dbdad8); }
.wire-icon { width: 16px; height: 16px; fill: none; stroke: #5a3fc8; stroke-width: 1.5; }
.splitter { height: 7px; display: grid; place-items: center; }
.splitter i { width: 7px; height: 5px; background: repeating-linear-gradient(90deg, #c4c1bd 0 1px, transparent 1px 3px); }
.props { flex: 1; border: 1px solid #b8b4af; border-radius: 3px; padding: 1px 2px; background: #fff; box-shadow: inset 0 0 0 1px #d4d1ce; }
table { width: 100%; table-layout: fixed; border-collapse: separate; border-spacing: 0; color: #3c3c3c; }
col.gutter { width: 20px; }
col.name { width: 80px; }
th { height: 26px; padding: 0 4px; text-align: left; font-weight: 400; color: #4a4a4a; border-right: 1px solid #c9c6c2; border-bottom: 1px solid #aaa7a3; background: linear-gradient(#fff, #efeeed); }
td { height: 20px; padding: 0; line-height: 18px; white-space: nowrap; }
td.lead { text-align: center; line-height: 0; }
td.lead svg { width: 8px; height: 8px; }
td.label, td.value { padding: 0 4px 0 3px; border-bottom: 1px solid #c3c1be; border-right: 1px solid #c3c1be; }
tr.group td { background: #c9c8c7; color: #fff; font-weight: 700; }
tr.group td + td { padding-left: 3px; }
tr.tint td { background: #efefef; }
tr.edit .lead, tr.edit .label { background: #f07746; color: #fff; border-bottom-color: #f07746; }
.editor { display: flex; align-items: center; height: 18px; }
.editor input { flex: 1; min-width: 0; height: 18px; padding: 0; border: 0; outline: 0; background: #fff; line-height: 18px; }
.editor input::selection { background: #f07746; color: #fff; }
.sub-tabs { height: 31px; display: flex; }
.sub-tabs button { position: relative; width: 48px; height: 30px; }
.sub-tabs svg { position: absolute; left: 0; top: 0; width: 48px; height: 30px; stroke: #4f4f4f; }
.sub-tabs span { position: relative; }

.vsplit { width: 6px; flex: none; }
.vsplit i { display: block; width: 5px; height: 8px; margin: 456px 0 0 1px; background: repeating-linear-gradient(#c4c1bd 0 1px, transparent 1px 3px); }
.mdi { flex: 1; min-width: 0; display: flex; flex-direction: column; }
.canvas { position: relative; flex: 1; min-height: 820px; background: linear-gradient(#333365, #9898ac); border-bottom: 1px solid #a8a5a2; }
.scene { position: absolute; inset: 0; width: 100%; height: 100%; }
.axes { position: absolute; right: 0; bottom: 24px; width: 60px; height: 60px; }
.axes text { font: 9px "DejaVu Sans", sans-serif; fill: #000; }
.mdi-tabs { height: 32px; display: flex; }
.mdi-tab { width: 164px; height: 32px; display: flex; align-items: center; padding: 0 10px 0 7px; border: 1px solid #b8b4af; border-top: 0; border-radius: 0 0 4px 4px; background: linear-gradient(#f4f3f2, #fff); }
.fc { width: 14px; height: 14px; margin-right: 9px; }
.mdi-tab span { flex: 1; white-space: nowrap; }
.mdi-tab button, .mdi-tab button svg { display: block; width: 12px; height: 12px; }
.status { height: 32px; display: flex; align-items: center; justify-content: space-between; padding: 0 25px 1px 4px; border-top: 1px solid #d6d4d1; border-bottom: 1px solid #000; }
</style>
